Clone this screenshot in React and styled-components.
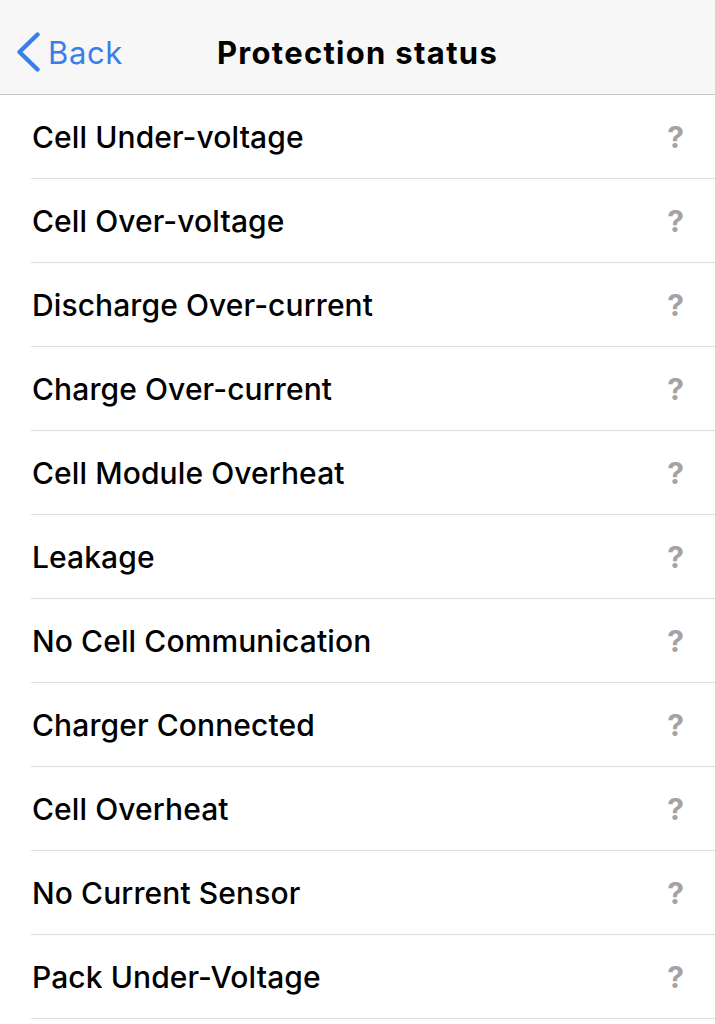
import React from "react";
import styled, { createGlobalStyle } from "styled-components";

const Global = createGlobalStyle`
  html, body { margin: 0; padding: 0; background: #ffffff; }
  body { font-family: Inter, "Noto Sans", "Liberation Sans", sans-serif; -webkit-font-smoothing: antialiased; }
`;

const Page = styled.div`
  width: 715px;
  min-height: 1024px;
  background: #ffffff;
  overflow: hidden;
`;

const NavBar = styled.header`
  height: 94px;
  background: #f7f7f7;
  border-bottom: 1px solid #c9c9cc;
  display: grid;
  grid-template-columns: 1fr auto 1fr;
  align-items: center;
`;

const BackButton = styled.div`
  display: flex;
  align-items: center;
  gap: 8px;
  padding-left: 16px;
  color: #3a7ee8;
  font-size: 31px;
  font-weight: 400;
  letter-spacing: 0.6px;
  margin-top: 10px;
`;

const Title = styled.h1`
  margin: 0;
  font-size: 31px;
  font-weight: 700;
  color: #000;
  letter-spacing: 1.3px;
  margin-top: 10px;
`;

const List = styled.ul`
  list-style: none;
  margin: 0;
  padding: 0;
`;

const Row = styled.li`
  height: 84px;
  margin-left: 31px;
  padding-right: 31px;
  border-bottom: 1px solid #dcdce0;
  display: flex;
  align-items: center;
  justify-content: space-between;
  box-sizing: border-box;
`;

const Label = styled.span`
  font-size: 30px;
  font-weight: 500;
  color: #000;
  letter-spacing: 0.1px;
  padding-left: 1px;
`;

const Status = styled.span`
  font-size: 30px;
  font-weight: 700;
  color: #a3a3a6;
`;

const items = [
  "Cell Under-voltage",
  "Cell Over-voltage",
  "Discharge Over-current",
  "Charge Over-current",
  "Cell Module Overheat",
  "Leakage",
  "No Cell Communication",
  "Charger Connected",
  "Cell Overheat",
  "No Current Sensor",
  "Pack Under-Voltage",
];

export default function App() {
  return (
    <Page>
      <Global />
      <NavBar>
        <BackButton>
          <svg width="24" height="40" viewBox="0 0 24 40" fill="none">
            <path d="M21.5 2.5 L3.5 20 L21.5 37.5" stroke="#3a7ee8" strokeWidth="4.4" strokeLinecap="round" strokeLinejoin="round" />
          </svg>
          Back
        </BackButton>
        <Title>Protection status</Title>
        <div />
      </NavBar>
      <List>
        {items.map((t) => (
          <Row key={t}>
            <Label>{t}</Label>
            <Status>?</Status>
          </Row>
        ))}
      </List>
    </Page>
  );
}
